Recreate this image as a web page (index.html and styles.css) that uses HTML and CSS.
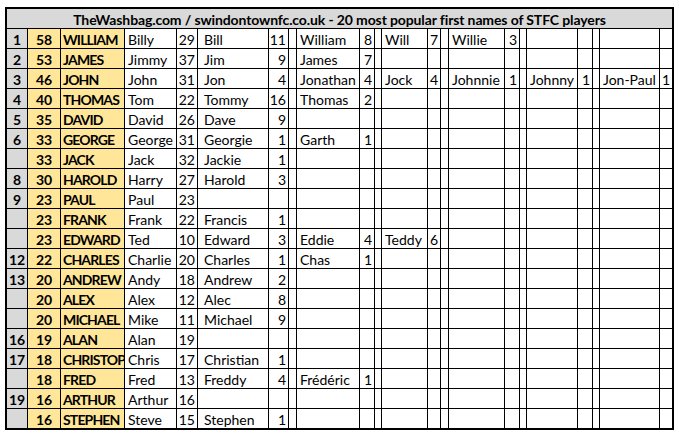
FILE: index.html
```html
<!DOCTYPE html>
<html lang="en">
<head>
<meta charset="utf-8">
<title>20 most popular first names of STFC players</title>
<link rel="stylesheet" href="styles.css">
</head>
<body>
<div class="sheet">
  <div class="c title">TheWashbag.com / swindontownfc.co.uk - 20 most popular first names of STFC players</div>

  <div class="row"><div class="c rk">1</div><div class="c ct">58</div><div class="c nm">WILLIAM</div><div class="c nk">Billy</div><div class="c n">29</div><div class="c"></div><div class="c nk">Bill</div><div class="c n">11</div><div class="c"></div><div class="c nk">William</div><div class="c n">8</div><div class="c"></div><div class="c nk">Will</div><div class="c n">7</div><div class="c"></div><div class="c nk">Willie</div><div class="c n">3</div><div class="c"></div><div class="c nk"></div><div class="c n"></div><div class="c"></div><div class="c nk"></div><div class="c n"></div></div>

  <div class="row"><div class="c rk">2</div><div class="c ct">53</div><div class="c nm">JAMES</div><div class="c nk">Jimmy</div><div class="c n">37</div><div class="c"></div><div class="c nk">Jim</div><div class="c n">9</div><div class="c"></div><div class="c nk">James</div><div class="c n">7</div><div class="c"></div><div class="c nk"></div><div class="c n"></div><div class="c"></div><div class="c nk"></div><div class="c n"></div><div class="c"></div><div class="c nk"></div><div class="c n"></div><div class="c"></div><div class="c nk"></div><div class="c n"></div></div>

  <div class="row"><div class="c rk">3</div><div class="c ct">46</div><div class="c nm">JOHN</div><div class="c nk">John</div><div class="c n">31</div><div class="c"></div><div class="c nk">Jon</div><div class="c n">4</div><div class="c"></div><div class="c nk">Jonathan</div><div class="c n">4</div><div class="c"></div><div class="c nk">Jock</div><div class="c n">4</div><div class="c"></div><div class="c nk">Johnnie</div><div class="c n">1</div><div class="c"></div><div class="c nk">Johnny</div><div class="c n">1</div><div class="c"></div><div class="c nk">Jon-Paul</div><div class="c n">1</div></div>

  <div class="row"><div class="c rk">4</div><div class="c ct">40</div><div class="c nm">THOMAS</div><div class="c nk">Tom</div><div class="c n">22</div><div class="c"></div><div class="c nk">Tommy</div><div class="c n">16</div><div class="c"></div><div class="c nk">Thomas</div><div class="c n">2</div><div class="c"></div><div class="c nk"></div><div class="c n"></div><div class="c"></div><div class="c nk"></div><div class="c n"></div><div class="c"></div><div class="c nk"></div><div class="c n"></div><div class="c"></div><div class="c nk"></div><div class="c n"></div></div>

  <div class="row"><div class="c rk">5</div><div class="c ct">35</div><div class="c nm">DAVID</div><div class="c nk">David</div><div class="c n">26</div><div class="c"></div><div class="c nk">Dave</div><div class="c n">9</div><div class="c"></div><div class="c nk"></div><div class="c n"></div><div class="c"></div><div class="c nk"></div><div class="c n"></div><div class="c"></div><div class="c nk"></div><div class="c n"></div><div class="c"></div><div class="c nk"></div><div class="c n"></div><div class="c"></div><div class="c nk"></div><div class="c n"></div></div>

  <div class="row"><div class="c rk">6</div><div class="c ct">33</div><div class="c nm">GEORGE</div><div class="c nk">George</div><div class="c n">31</div><div class="c"></div><div class="c nk">Georgie</div><div class="c n">1</div><div class="c"></div><div class="c nk">Garth</div><div class="c n">1</div><div class="c"></div><div class="c nk"></div><div class="c n"></div><div class="c"></div><div class="c nk"></div><div class="c n"></div><div class="c"></div><div class="c nk"></div><div class="c n"></div><div class="c"></div><div class="c nk"></div><div class="c n"></div></div>

  <div class="row"><div class="c rk"></div><div class="c ct">33</div><div class="c nm">JACK</div><div class="c nk">Jack</div><div class="c n">32</div><div class="c"></div><div class="c nk">Jackie</div><div class="c n">1</div><div class="c"></div><div class="c nk"></div><div class="c n"></div><div class="c"></div><div class="c nk"></div><div class="c n"></div><div class="c"></div><div class="c nk"></div><div class="c n"></div><div class="c"></div><div class="c nk"></div><div class="c n"></div><div class="c"></div><div class="c nk"></div><div class="c n"></div></div>

  <div class="row"><div class="c rk">8</div><div class="c ct">30</div><div class="c nm">HAROLD</div><div class="c nk">Harry</div><div class="c n">27</div><div class="c"></div><div class="c nk">Harold</div><div class="c n">3</div><div class="c"></div><div class="c nk"></div><div class="c n"></div><div class="c"></div><div class="c nk"></div><div class="c n"></div><div class="c"></div><div class="c nk"></div><div class="c n"></div><div class="c"></div><div class="c nk"></div><div class="c n"></div><div class="c"></div><div class="c nk"></div><div class="c n"></div></div>

  <div class="row"><div class="c rk">9</div><div class="c ct">23</div><div class="c nm">PAUL</div><div class="c nk">Paul</div><div class="c n">23</div><div class="c"></div><div class="c nk"></div><div class="c n"></div><div class="c"></div><div class="c nk"></div><div class="c n"></div><div class="c"></div><div class="c nk"></div><div class="c n"></div><div class="c"></div><div class="c nk"></div><div class="c n"></div><div class="c"></div><div class="c nk"></div><div class="c n"></div><div class="c"></div><div class="c nk"></div><div class="c n"></div></div>

  <div class="row"><div class="c rk"></div><div class="c ct">23</div><div class="c nm">FRANK</div><div class="c nk">Frank</div><div class="c n">22</div><div class="c"></div><div class="c nk">Francis</div><div class="c n">1</div><div class="c"></div><div class="c nk"></div><div class="c n"></div><div class="c"></div><div class="c nk"></div><div class="c n"></div><div class="c"></div><div class="c nk"></div><div class="c n"></div><div class="c"></div><div class="c nk"></div><div class="c n"></div><div class="c"></div><div class="c nk"></div><div class="c n"></div></div>

  <div class="row"><div class="c rk"></div><div class="c ct">23</div><div class="c nm">EDWARD</div><div class="c nk">Ted</div><div class="c n">10</div><div class="c"></div><div class="c nk">Edward</div><div class="c n">3</div><div class="c"></div><div class="c nk">Eddie</div><div class="c n">4</div><div class="c"></div><div class="c nk">Teddy</div><div class="c n">6</div><div class="c"></div><div class="c nk"></div><div class="c n"></div><div class="c"></div><div class="c nk"></div><div class="c n"></div><div class="c"></div><div class="c nk"></div><div class="c n"></div></div>

  <div class="row"><div class="c rk">12</div><div class="c ct">22</div><div class="c nm">CHARLES</div><div class="c nk">Charlie</div><div class="c n">20</div><div class="c"></div><div class="c nk">Charles</div><div class="c n">1</div><div class="c"></div><div class="c nk">Chas</div><div class="c n">1</div><div class="c"></div><div class="c nk"></div><div class="c n"></div><div class="c"></div><div class="c nk"></div><div class="c n"></div><div class="c"></div><div class="c nk"></div><div class="c n"></div><div class="c"></div><div class="c nk"></div><div class="c n"></div></div>

  <div class="row"><div class="c rk">13</div><div class="c ct">20</div><div class="c nm">ANDREW</div><div class="c nk">Andy</div><div class="c n">18</div><div class="c"></div><div class="c nk">Andrew</div><div class="c n">2</div><div class="c"></div><div class="c nk"></div><div class="c n"></div><div class="c"></div><div class="c nk"></div><div class="c n"></div><div class="c"></div><div class="c nk"></div><div class="c n"></div><div class="c"></div><div class="c nk"></div><div class="c n"></div><div class="c"></div><div class="c nk"></div><div class="c n"></div></div>

  <div class="row"><div class="c rk"></div><div class="c ct">20</div><div class="c nm">ALEX</div><div class="c nk">Alex</div><div class="c n">12</div><div class="c"></div><div class="c nk">Alec</div><div class="c n">8</div><div class="c"></div><div class="c nk"></div><div class="c n"></div><div class="c"></div><div class="c nk"></div><div class="c n"></div><div class="c"></div><div class="c nk"></div><div class="c n"></div><div class="c"></div><div class="c nk"></div><div class="c n"></div><div class="c"></div><div class="c nk"></div><div class="c n"></div></div>

  <div class="row"><div class="c rk"></div><div class="c ct">20</div><div class="c nm">MICHAEL</div><div class="c nk">Mike</div><div class="c n">11</div><div class="c"></div><div class="c nk">Michael</div><div class="c n">9</div><div class="c"></div><div class="c nk"></div><div class="c n"></div><div class="c"></div><div class="c nk"></div><div class="c n"></div><div class="c"></div><div class="c nk"></div><div class="c n"></div><div class="c"></div><div class="c nk"></div><div class="c n"></div><div class="c"></div><div class="c nk"></div><div class="c n"></div></div>

  <div class="row"><div class="c rk">16</div><div class="c ct">19</div><div class="c nm">ALAN</div><div class="c nk">Alan</div><div class="c n">19</div><div class="c"></div><div class="c nk"></div><div class="c n"></div><div class="c"></div><div class="c nk"></div><div class="c n"></div><div class="c"></div><div class="c nk"></div><div class="c n"></div><div class="c"></div><div class="c nk"></div><div class="c n"></div><div class="c"></div><div class="c nk"></div><div class="c n"></div><div class="c"></div><div class="c nk"></div><div class="c n"></div></div>

  <div class="row"><div class="c rk">17</div><div class="c ct">18</div><div class="c nm">CHRISTOP</div><div class="c nk">Chris</div><div class="c n">17</div><div class="c"></div><div class="c nk">Christian</div><div class="c n">1</div><div class="c"></div><div class="c nk"></div><div class="c n"></div><div class="c"></div><div class="c nk"></div><div class="c n"></div><div class="c"></div><div class="c nk"></div><div class="c n"></div><div class="c"></div><div class="c nk"></div><div class="c n"></div><div class="c"></div><div class="c nk"></div><div class="c n"></div></div>

  <div class="row"><div class="c rk"></div><div class="c ct">18</div><div class="c nm">FRED</div><div class="c nk">Fred</div><div class="c n">13</div><div class="c"></div><div class="c nk">Freddy</div><div class="c n">4</div><div class="c"></div><div class="c nk">Frédéric</div><div class="c n">1</div><div class="c"></div><div class="c nk"></div><div class="c n"></div><div class="c"></div><div class="c nk"></div><div class="c n"></div><div class="c"></div><div class="c nk"></div><div class="c n"></div><div class="c"></div><div class="c nk"></div><div class="c n"></div></div>

  <div class="row"><div class="c rk">19</div><div class="c ct">16</div><div class="c nm">ARTHUR</div><div class="c nk">Arthur</div><div class="c n">16</div><div class="c"></div><div class="c nk"></div><div class="c n"></div><div class="c"></div><div class="c nk"></div><div class="c n"></div><div class="c"></div><div class="c nk"></div><div class="c n"></div><div class="c"></div><div class="c nk"></div><div class="c n"></div><div class="c"></div><div class="c nk"></div><div class="c n"></div><div class="c"></div><div class="c nk"></div><div class="c n"></div></div>

  <div class="row"><div class="c rk"></div><div class="c ct">16</div><div class="c nm">STEPHEN</div><div class="c nk">Steve</div><div class="c n">15</div><div class="c"></div><div class="c nk">Stephen</div><div class="c n">1</div><div class="c"></div><div class="c nk"></div><div class="c n"></div><div class="c"></div><div class="c nk"></div><div class="c n"></div><div class="c"></div><div class="c nk"></div><div class="c n"></div><div class="c"></div><div class="c nk"></div><div class="c n"></div><div class="c"></div><div class="c nk"></div><div class="c n"></div></div>
</div>
</body>
</html>
```

FILE: styles.css
```css
html, body {
  margin: 0;
  padding: 0;
  background: #ffffff;
}

body {
  padding: 7px 0 0 5px;
  font-family: Lato, "Liberation Sans", sans-serif;
  font-size: 14px;
  color: #000000;
}

.sheet {
  display: grid;
  grid-template-columns:
    20px 32px 63px
    51px 20px 2px
    67px 19px 7px
    62px 14px 6px
    45px 12px 7px
    55px 14px 6px
    50px 14px 6px
    59px 12px;
  grid-auto-rows: 19px;
  gap: 1px;
  width: max-content;
  background: #000000;
  border: 2px solid #000000;
}

.row {
  display: contents;
}

.c {
  background: #ffffff;
  line-height: 21px;
  white-space: nowrap;
  overflow: hidden;
  padding: 0 2px;
}

.title {
  grid-column: 1 / -1;
  background: #d9d9d9;
  font-weight: 700;
  text-align: center;
  letter-spacing: -0.12px;
}

.rk {
  background: #d9d9d9;
  font-weight: 700;
  text-align: center;
}

.ct {
  background: #ffe699;
  font-weight: 700;
  text-align: center;
}

.nm {
  background: #ffe699;
  font-weight: 700;
  padding: 0 0 0 2px;
  letter-spacing: -0.85px;
}

.nk {
  padding-left: 3px;
}

.n {
  text-align: right;
  padding: 0 2px 0 0;
}
```
